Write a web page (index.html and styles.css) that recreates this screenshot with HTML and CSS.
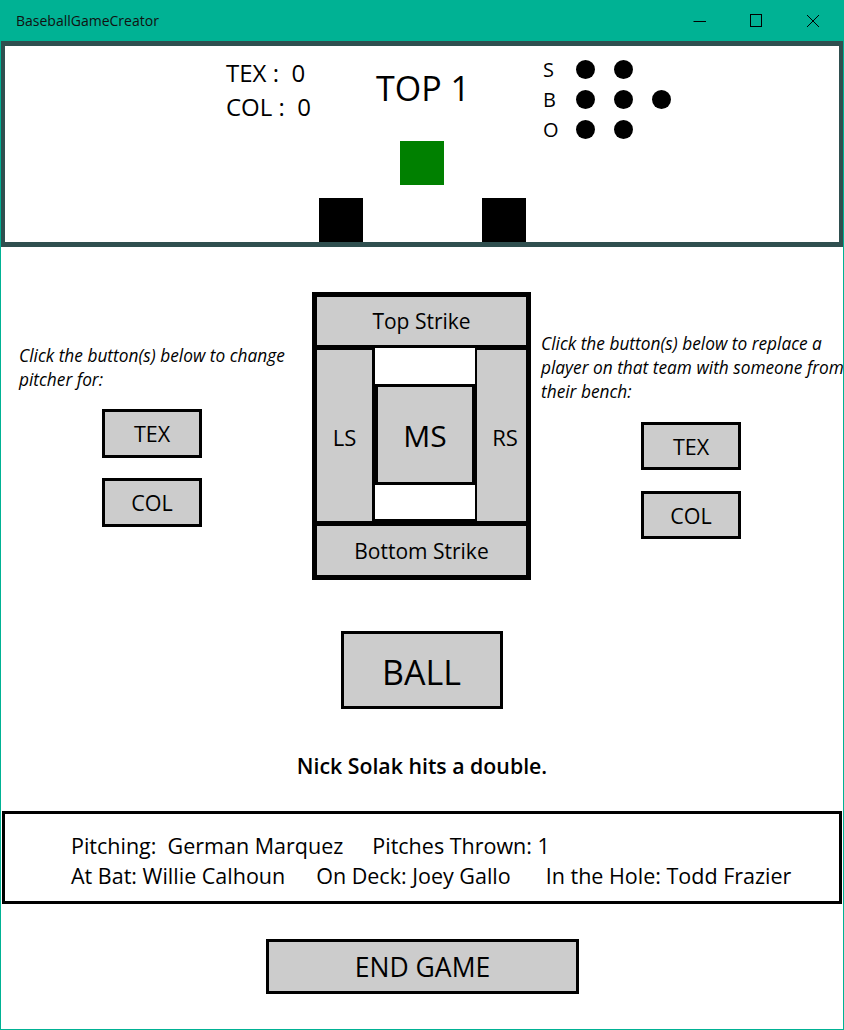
FILE: index.html
```html
<!DOCTYPE html>
<html>
<head>
<meta charset="utf-8">
<link rel="stylesheet" href="styles.css">
</head>
<body>
<div class="window">
  <div class="titlebar">
    <span class="title">BaseballGameCreator</span>
    <div class="controls">
      <span class="ctl"><svg width="14" height="14" viewBox="0 0 14 14"><line x1="0.5" y1="7.5" x2="13" y2="7.5" stroke="#000" stroke-width="1"/></svg></span>
      <span class="ctl"><svg width="14" height="14" viewBox="0 0 14 14"><rect x="1.5" y="0.5" width="11" height="12" fill="none" stroke="#000" stroke-width="1"/></svg></span>
      <span class="ctl"><svg width="14" height="14" viewBox="0 0 14 14"><path d="M1 1 L13 13 M13 1 L1 13" stroke="#000" stroke-width="1" fill="none"/></svg></span>
    </div>
  </div>

  <div class="scoreboard">
    <div class="top-row">
      <div class="scores">
        <div>TEX :&nbsp; 0</div>
        <div>COL :&nbsp; 0</div>
      </div>
      <div class="inning">TOP 1</div>
      <div class="count">
        <div class="count-row"><span class="lbl">S</span><span class="dot"></span><span class="dot"></span></div>
        <div class="count-row"><span class="lbl">B</span><span class="dot"></span><span class="dot"></span><span class="dot"></span></div>
        <div class="count-row"><span class="lbl">O</span><span class="dot"></span><span class="dot"></span></div>
      </div>
    </div>
    <div class="bases">
      <div class="base base-second"></div>
      <div class="base-row">
        <div class="base base-empty"></div>
        <div class="base base-empty"></div>
      </div>
    </div>
  </div>

  <div class="middle">
    <div class="side side-left">
      <p class="hint">Click the button(s) below to change<br>pitcher for:</p>
      <div class="team-btns">
        <div class="btn team">TEX</div>
        <div class="btn team">COL</div>
      </div>
    </div>

    <div class="zone">
      <div class="cell top-strike">Top Strike</div>
      <div class="zone-mid">
        <div class="cell ls">LS</div>
        <div class="center-col">
          <div class="white-gap"></div>
          <div class="ms">MS</div>
          <div class="white-gap white-gap-bottom"></div>
        </div>
        <div class="cell rs">RS</div>
      </div>
      <div class="cell bottom-strike">Bottom Strike</div>
    </div>

    <div class="side side-right">
      <p class="hint">Click the button(s) below to replace a<br>player on that team with someone from<br>their bench:</p>
      <div class="team-btns team-btns-right">
        <div class="btn team">TEX</div>
        <div class="btn team">COL</div>
      </div>
    </div>
  </div>

  <div class="ball-wrap"><div class="btn ball">BALL</div></div>

  <p class="status">Nick Solak hits a double.</p>

  <div class="info">
    <div class="info-row"><span>Pitching:&nbsp; German Marquez</span><span>Pitches Thrown: 1</span></div>
    <div class="info-row"><span>At Bat: Willie Calhoun</span><span>On Deck: Joey Gallo</span><span>In the Hole: Todd Frazier</span></div>
  </div>

  <div class="end-wrap"><div class="btn end">END GAME</div></div>
</div>
</body>
</html>
```

FILE: styles.css
```css
* { box-sizing: border-box; }
html, body { margin: 0; padding: 0; background: #ffffff; }
body { font-family: "Open Sans", "Noto Sans", sans-serif; color: #000; }

.window {
  width: 844px;
  height: 1030px;
  border: 1px solid #00b294;
  border-top: none;
  background: #fff;
  overflow: hidden;
}

.titlebar {
  height: 41px;
  margin: 0 -1px;
  background: #00b294;
  display: flex;
  align-items: center;
  justify-content: space-between;
  padding-left: 16px;
}
.title { font-size: 14px; color: #111; }
.controls { display: flex; height: 41px; padding-right: 3px; }
.ctl {
  width: 57px;
  display: flex;
  align-items: center;
  justify-content: center;
  padding-top: 1px;
}
.ctl:first-child { padding-left: 2px; }

.scoreboard {
  border: 4px solid #2f4f4f;
  border-top-width: 5px;
  border-bottom-width: 5px;
  height: 206px;
  padding-top: 9px;
}
.top-row {
  height: 86px;
  display: flex;
  align-items: flex-start;
  padding-left: 221px;
}
.scores { width: 150px; font-size: 24px; line-height: 34px; white-space: nowrap; margin-top: 1px; }
.inning { width: 166px; font-size: 34px; line-height: 40px; margin-top: 13px; }
.count { font-size: 20px; margin-top: -1px; }
.count-row { height: 30px; display: flex; align-items: center; }
.lbl { width: 34px; padding-left: 1px; }
.dot {
  width: 19px; height: 19px; border-radius: 50%; background: #000;
  margin-right: 19px;
}
.bases { display: flex; flex-direction: column; align-items: center; }
.base { width: 44px; height: 44px; }
.base-second { background: #008000; }
.base-row { display: flex; gap: 119px; margin-top: 13px; margin-left: 1px; }
.base-empty { background: #000; }

.middle {
  display: grid;
  grid-template-columns: 311px 219px 312px;
  margin-top: 45px;
}
.hint {
  margin: 0;
  font-style: italic;
  font-size: 17.3px;
  line-height: 24px;
  white-space: nowrap;
}
.side-left .hint { margin-top: 52px; padding-left: 18px; }
.side-right .hint { margin-top: 40px; padding-left: 10px; }
.team-btns { display: flex; flex-direction: column; gap: 20px; margin-top: 17px; padding-left: 101px; }
.team-btns-right { gap: 21px; margin-top: 18px; padding-left: 110px; }

.btn {
  background: #cccccc;
  border: 3px solid #000;
  display: flex;
  align-items: center;
  justify-content: center;
}
.team { width: 100px; height: 49px; font-size: 21.5px; }
.team-btns-right .team { height: 48px; }

.zone {
  height: 288px;
  background: #000;
  padding: 5px;
  display: flex;
  flex-direction: column;
  gap: 5px;
}
.cell {
  background: #cccccc;
  display: flex;
  align-items: center;
  justify-content: center;
}
.top-strike, .bottom-strike { height: 48px; font-size: 21px; }
.bottom-strike { height: 49px; }
.zone-mid { height: 171px; display: flex; }
.ls { width: 55px; font-size: 22px; padding-top: 2px; }
.rs { width: 49px; font-size: 22px; margin-left: 2px; padding-left: 7px; padding-top: 2px; }
.center-col { width: 100px; margin-left: 3px; display: flex; flex-direction: column; }
.white-gap { height: 36px; background: #fff; margin-top: -2px; }
.white-gap-bottom { height: 34px; margin-top: 0; margin-bottom: -2px; }
.ms {
  height: 101px;
  background: #cccccc;
  border: 3px solid #000;
  display: flex;
  align-items: center;
  justify-content: center;
  font-size: 30px;
  padding-top: 2px;
}

.ball-wrap { display: flex; justify-content: center; margin-top: 51px; }
.ball { width: 162px; height: 78px; font-size: 34px; margin-right: 1px; padding-top: 3px; }

.status {
  margin: 43px 0 0;
  text-align: center;
  font-size: 21.3px;
  font-weight: 600;
  line-height: 28px;
}

.info {
  margin: 31px 0 0 1px;
  width: 840px;
  height: 93px;
  border: 3px solid #000;
  padding: 17px 0 0 66px;
  font-size: 21.5px;
  line-height: 30px;
}
.info-row { display: flex; gap: 31px; white-space: nowrap; }
.info-row:first-child { gap: 29px; }
.info-row:last-child span:last-child { margin-left: 4px; }

.end-wrap { display: flex; justify-content: center; margin-top: 35px; }
.end { width: 313px; height: 55px; font-size: 26.5px; margin-left: 1px; }
```
